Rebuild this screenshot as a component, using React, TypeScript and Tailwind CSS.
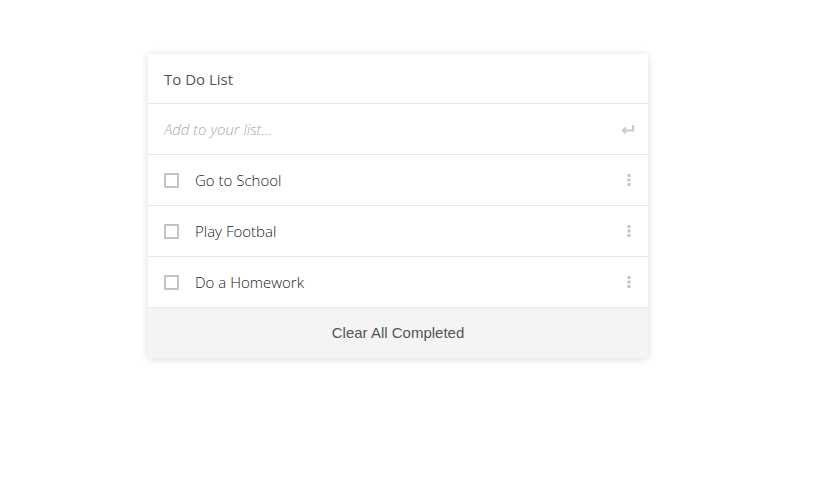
import { useState } from "react";

type Todo = { id: number; text: string; done: boolean };

const KebabIcon = () => (
  <svg width="4" height="14" viewBox="0 0 4 14" className="fill-[#c4c4c4]">
    <rect x="0.5" y="1" width="3" height="3" rx="0.5" />
    <rect x="0.5" y="5.5" width="3" height="3" rx="0.5" />
    <rect x="0.5" y="10" width="3" height="3" rx="0.5" />
  </svg>
);

const EnterIcon = () => (
  <svg width="14" height="10" viewBox="0 0 14 10" fill="none" className="stroke-[#c8c8c8]">
    <path d="M12.5 1v5.5H2" strokeWidth="2" />
    <path d="M5 3.5L2 6.5l3 3" strokeWidth="2" />
  </svg>
);

export default function App() {
  const [todos, setTodos] = useState<Todo[]>([
    { id: 1, text: "Go to School", done: false },
    { id: 2, text: "Play Footbal", done: false },
    { id: 3, text: "Do a Homework", done: false },
  ]);

  const toggle = (id: number) =>
    setTodos((prev) => prev.map((t) => (t.id === id ? { ...t, done: !t.done } : t)));

  return (
    <div className="min-h-screen bg-white pt-[54px] pl-[148px] font-['Open_Sans',sans-serif]">
      <div className="w-[500px] bg-white shadow-[0_1px_8px_rgba(0,0,0,0.14)]">
        {/* HEADER */}
        <div className="flex h-[50px] items-center border-b border-[#e8e8e8] px-4 pt-[2px] text-[15px] text-[#555]">
          To Do List
        </div>

        {/* INPUT */}
        <div className="flex h-[51px] items-center justify-between border-b border-[#e8e8e8] pr-[13px] pl-4">
          <input
            placeholder="Add to your list..."
            className="w-full bg-transparent text-[15px] font-light italic text-[#333] outline-none placeholder:text-[#aaa]"
          />
          <EnterIcon />
        </div>

        {/* ITEMS */}
        {todos.map((todo) => (
          <div
            key={todo.id}
            className="flex h-[51px] items-center justify-between border-b border-[#e8e8e8] pr-[17px] pl-4"
          >
            <div className="flex items-center">
              <button
                onClick={() => toggle(todo.id)}
                className="h-[15px] w-[15px] border-2 border-[#c4c4c4]"
              />
              <span
                className={`ml-4 text-[15px] font-light text-[#222] ${
                  todo.done ? "line-through text-[#aaa]" : ""
                }`}
              >
                {todo.text}
              </span>
            </div>
            <KebabIcon />
          </div>
        ))}

        {/* FOOTER */}
        <button
          onClick={() => setTodos((prev) => prev.filter((t) => !t.done))}
          className="flex h-[50px] w-full items-center justify-center bg-[#f4f4f4] pt-[1px] font-['Liberation_Sans',Arial,sans-serif] text-[15px] text-[#555]"
        >
          Clear All Completed
        </button>
      </div>
    </div>
  );
}
